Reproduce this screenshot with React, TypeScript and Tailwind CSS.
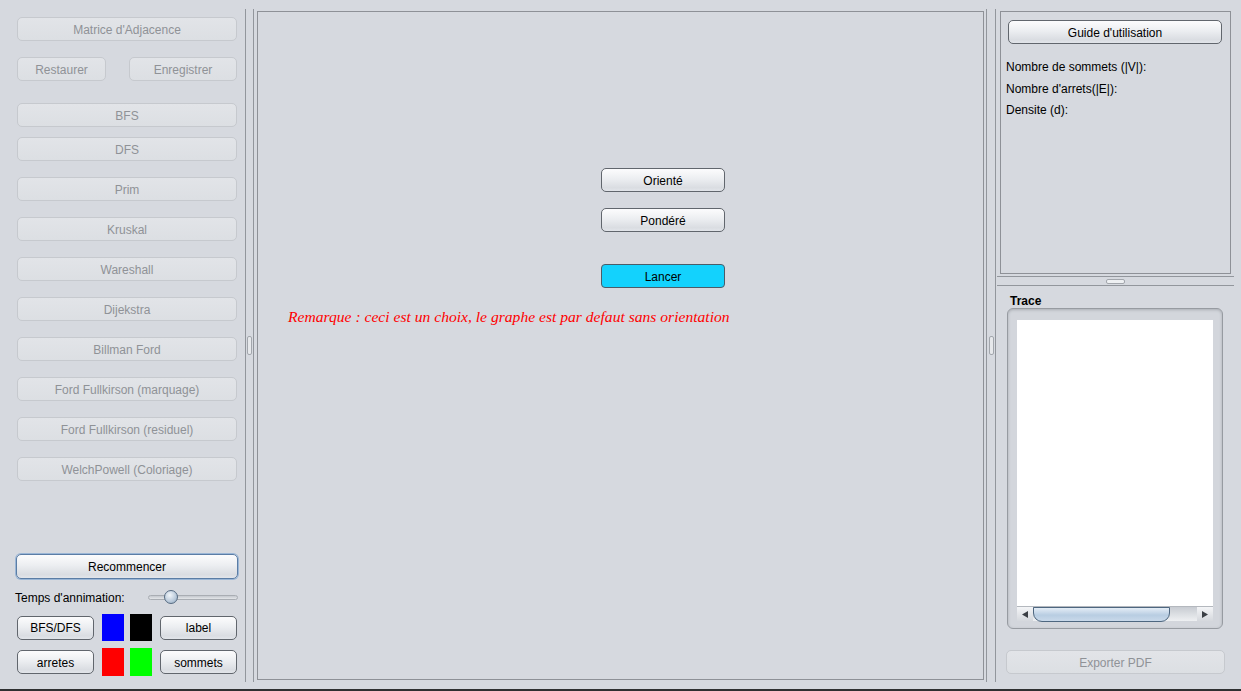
const enabledBtn =
  "flex items-center justify-center pt-px rounded-[5px] border border-[#61666d] bg-[linear-gradient(to_bottom,#fcfcfd,#eceef1_45%,#dadde2_85%,#e2e5ea)] text-black";
const disabledBtn =
  "flex items-center justify-center pt-px rounded-[5px] border border-[#c6c9ce] bg-[linear-gradient(to_bottom,#e2e4e8,#dcdfe3)] text-[#8f9297]";

function Btn({ label, className = "", disabled = false }: { label: string; className?: string; disabled?: boolean }) {
  return <div className={`${disabled ? disabledBtn : enabledBtn} ${className}`}>{label}</div>;
}

function VDivider({ wide = false }: { wide?: boolean }) {
  return (
    <div className={`${wide ? "w-[10px]" : "w-[9px]"} shrink-0 pt-[9px]`}>
      <div className={`h-[673px] ${wide ? "w-[10px]" : "w-[9px]"} border-x border-[#92969c] flex items-center justify-center`}>
        <div className="w-[5px] h-[19px] rounded-[2px] border border-[#a2a6ac] bg-[#e6e8eb]" />
      </div>
    </div>
  );
}

function LeftPanel() {
  const algos = [
    "Prim",
    "Kruskal",
    "Wareshall",
    "Dijekstra",
    "Billman Ford",
    "Ford Fullkirson (marquage)",
    "Ford Fullkirson (residuel)",
    "WelchPowell (Coloriage)",
  ];
  return (
    <div className="w-[245px] shrink-0 flex flex-col pl-[17px] pt-[17px]">
      <Btn disabled label="Matrice d'Adjacence" className="w-[220px] h-[24px]" />
      <div className="flex mt-[16px] gap-[23px]">
        <Btn disabled label="Restaurer" className="w-[89px] h-[24px]" />
        <Btn disabled label="Enregistrer" className="w-[108px] h-[24px]" />
      </div>
      <Btn disabled label="BFS" className="w-[220px] h-[24px] mt-[22px]" />
      <Btn disabled label="DFS" className="w-[220px] h-[24px] mt-[10px]" />
      {algos.map((a) => (
        <Btn key={a} disabled label={a} className="w-[220px] h-[24px] mt-[16px]" />
      ))}

      {/* bottom controls */}
      <div className="mt-[73px] -ml-[1px] w-[222px] h-[25px] pt-px flex items-center justify-center rounded-[5px] border border-[#5b7da5] bg-[linear-gradient(to_bottom,#fcfcfd,#eceef1_45%,#dadde2_85%,#e2e5ea)] shadow-[0_0_0_1px_#9ab6d6]">
        Recommencer
      </div>
      <div className="flex items-center -ml-[2px] mt-[6px] h-[24px]">
        <span className="w-[133px] pt-[2px]">Temps d'annimation:</span>
        <div className="relative w-[90px] h-[5px] rounded-full border border-[#a9adb3] bg-[linear-gradient(to_bottom,#c4c8ce,#e4e6e9)]">
          <div className="absolute -top-[6px] left-[15px] w-[14px] h-[14px] rounded-full border border-[#566b82] bg-[radial-gradient(circle_at_40%_35%,#f2f6fa,#b9c9da_60%,#8ea5bc)]" />
        </div>
      </div>
      <div className="flex items-center mt-[5px]">
        <Btn label="BFS/DFS" className="w-[77px] h-[24px]" />
        <div className="ml-[8px] w-[22px] h-[27px] bg-[#0000ff]" />
        <div className="ml-[6px] w-[22px] h-[27px] bg-black" />
        <Btn label="label" className="ml-[8px] w-[77px] h-[24px]" />
      </div>
      <div className="flex items-center mt-[7px]">
        <Btn label="arretes" className="w-[77px] h-[24px]" />
        <div className="ml-[8px] w-[22px] h-[28px] bg-[#ff0000]" />
        <div className="ml-[6px] w-[22px] h-[28px] bg-[#00ff00]" />
        <Btn label="sommets" className="ml-[8px] w-[77px] h-[24px]" />
      </div>
    </div>
  );
}

function CenterPanel() {
  return (
    <div className="w-[732px] shrink-0 pl-[3px] pt-[11px]">
      <div className="w-[727px] h-[669px] border border-[#8e9197] flex flex-col">
        <div className="flex flex-col pl-[343px] pt-[156px]">
          <Btn label="Orienté" className="w-[124px] h-[24px]" />
          <Btn label="Pondéré" className="w-[124px] h-[24px] mt-[16px]" />
          <div className="mt-[32px] w-[124px] h-[24px] pt-px flex items-center justify-center rounded-[4px] border border-[#4b5c68] bg-[#13d2fd] text-black">
            Lancer
          </div>
        </div>
        <div className="pl-[30px] mt-[20px] text-[15.6px] leading-[18px] italic text-[#ff0000] font-['Liberation_Serif',serif]">
          Remarque : ceci est un choix, le graphe est par defaut sans orientation
        </div>
      </div>
    </div>
  );
}

function RightPanel() {
  return (
    <div className="flex-1 flex flex-col">
      <div className="ml-[4px] mt-[11px] w-[231px] h-[263px] border border-[#8e9197] pl-[7px] pt-[8px]">
        <Btn label="Guide d'utilisation" className="w-[214px] h-[24px]" />
        <div className="-ml-[2px] mt-[13px] flex flex-col">
          <span className="h-[21.5px] leading-[21.5px]">Nombre de sommets (|V|):</span>
          <span className="h-[21.5px] leading-[21.5px]">Nombre d'arrets(|E|):</span>
          <span className="h-[21.5px] leading-[21.5px]">Densite (d):</span>
        </div>
      </div>
      <div className="ml-[1px] mt-[2px] w-[237px] h-[10px] border-y border-[#92969c] flex items-center justify-center">
        <div className="w-[19px] h-[5px] rounded-[2px] border border-[#a2a6ac] bg-[#eef0f2]" />
      </div>
      <div className="pl-[14px] mt-[8px] h-[14px] leading-[14px] font-bold">Trace</div>
      <div className="ml-[11px] w-[216px] h-[321px] rounded-[6px] border border-[#979ba1] bg-[#d3d6dc] shadow-[inset_0_1px_3px_#a9adb3] pl-[9px] pt-[11px]">
        <div className="w-[196px] h-[286px] bg-white" />
        <div className="w-[196px] h-[15px] flex items-center bg-[linear-gradient(to_bottom,#c8ccd2,#eef0f2)] border-t border-[#b4b8be]">
          <div className="w-[16px] h-[14px] flex items-center justify-center bg-[linear-gradient(to_bottom,#f4f5f7,#d5d8dd)]">
            <svg width="6" height="7" viewBox="0 0 6 7"><path d="M0 3.5 L6 0 L6 7 Z" fill="#3b3f45" /></svg>
          </div>
          <div className="w-[137px] h-[15px] rounded-b-[9px] border border-[#4e6780] bg-[linear-gradient(to_bottom,#e4edf6,#b8cde2_55%,#c9d9ea)]" />
          <div className="flex-1" />
          <div className="w-[16px] h-[14px] flex items-center justify-center bg-[linear-gradient(to_bottom,#f4f5f7,#d5d8dd)]">
            <svg width="6" height="7" viewBox="0 0 6 7"><path d="M6 3.5 L0 0 L0 7 Z" fill="#3b3f45" /></svg>
          </div>
        </div>
      </div>
      <Btn disabled label="Exporter PDF" className="ml-[10px] mt-[21px] w-[219px] h-[24px]" />
    </div>
  );
}

export default function App() {
  return (
    <div className="w-[1241px] h-[691px] bg-[#d6d9df] flex flex-col text-[12px] leading-[14px] text-black font-['Liberation_Sans',Arial,sans-serif]">
      <div className="flex h-[689px]">
        <LeftPanel />
        <VDivider />
        <CenterPanel />
        <VDivider wide />
        <RightPanel />
      </div>
      <div className="h-[2px] bg-[#2f3032]" />
    </div>
  );
}
